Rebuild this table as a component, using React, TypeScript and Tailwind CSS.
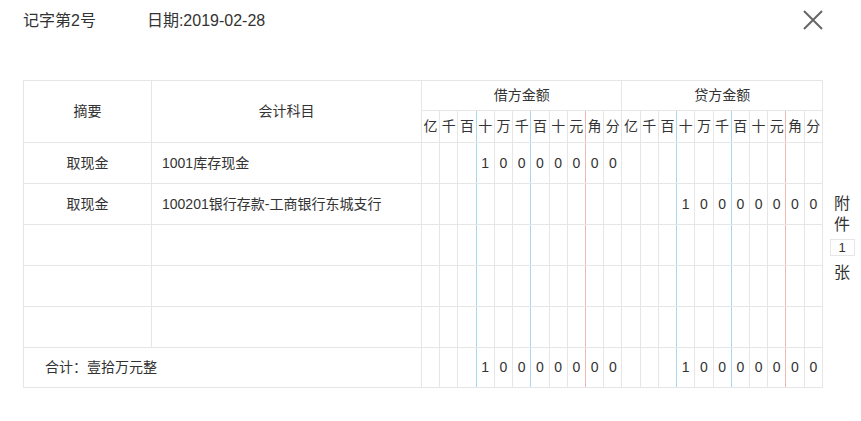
const units = ['亿', '千', '百', '十', '万', '千', '百', '十', '元', '角', '分']

type Row = {
  summary: string
  account: string
  debit: string
  credit: string
}

const rows: Row[] = [
  { summary: '取现金', account: '1001库存现金', debit: '10000000', credit: '' },
  { summary: '取现金', account: '100201银行存款-工商银行东城支行', debit: '', credit: '10000000' },
  { summary: '', account: '', debit: '', credit: '' },
  { summary: '', account: '', debit: '', credit: '' },
  { summary: '', account: '', debit: '', credit: '' },
]

// border on the right side of a digit cell: blue every 3 digits, red before 角
const digitBorder = (i: number) => {
  if (i === 2 || i === 5) return 'border-r-[#a9d6f0]'
  if (i === 8) return 'border-r-[#efb9b2]'
  return ''
}

const cell = 'border border-[#e6e6e6] p-0'

const Digits = ({ value }: { value: string }) => {
  const padded = value.padStart(11, ' ')
  return (
    <>
      {units.map((_, i) => (
        <td key={i} className={`${cell} ${digitBorder(i)} text-center`}>
          {padded[i].trim()}
        </td>
      ))}
    </>
  )
}

export default function App() {
  return (
    <div
      className="w-[861px] h-[421px] bg-white text-[#333] pl-[23px]"
      style={{ fontFamily: '"Liberation Sans", "Noto Sans CJK SC", sans-serif' }}
    >
      <div className="flex items-center h-[42px] w-[800px]">
        <span className="text-[16px]">记字第2号</span>
        <span className="text-[16px] ml-[51px]">日期:2019-02-28</span>
        <button className="ml-auto mr-[-2px] mt-[-2px] w-[24px] h-[24px] flex items-center justify-center">
          <svg width="22" height="22" viewBox="0 0 22 22">
            <path d="M2 2 L20 20 M20 2 L2 20" stroke="#666" strokeWidth="2" fill="none" />
          </svg>
        </button>
      </div>

      <div className="flex mt-[38px]">
        <table className="table-fixed shrink-0 border-collapse w-[800px] text-[14px]">
          <colgroup>
            <col className="w-[128px]" />
            <col className="w-[270px]" />
            {[...units, ...units].map((_, i) => (
              <col key={i} />
            ))}
          </colgroup>
          <thead>
            <tr className="h-[30px]">
              <th rowSpan={2} className={`${cell} font-normal`}>摘要</th>
              <th rowSpan={2} className={`${cell} font-normal`}>会计科目</th>
              <th colSpan={11} className={`${cell} font-normal`}>借方金额</th>
              <th colSpan={11} className={`${cell} font-normal`}>贷方金额</th>
            </tr>
            <tr className="h-[32px]">
              {[...units, ...units].map((u, i) => (
                <th key={i} className={`${cell} ${digitBorder(i % 11)} font-normal text-center`}>
                  {u}
                </th>
              ))}
            </tr>
          </thead>
          <tbody>
            {rows.map((r, idx) => (
              <tr key={idx} className="h-[41px]">
                <td className={`${cell} text-center`}>{r.summary}</td>
                <td className={`${cell} pl-[10px]`}>{r.account}</td>
                <Digits value={r.debit} />
                <Digits value={r.credit} />
              </tr>
            ))}
            <tr className="h-[40px]">
              <td colSpan={2} className={`${cell} pl-[21px]`}>合计：壹拾万元整</td>
              <Digits value="10000000" />
              <Digits value="10000000" />
            </tr>
          </tbody>
        </table>

        <div className="flex flex-col items-center justify-center shrink-0 w-[36px] ml-[1px] text-[16px] leading-[21px] pt-[8px]">
          <span>附</span>
          <span>件</span>
          <span className="mt-[4px] mb-[6px] w-[25px] h-[17px] border border-[#e6e6e6] text-[13px] leading-[15px] text-center">
            1
          </span>
          <span>张</span>
        </div>
      </div>
    </div>
  )
}
